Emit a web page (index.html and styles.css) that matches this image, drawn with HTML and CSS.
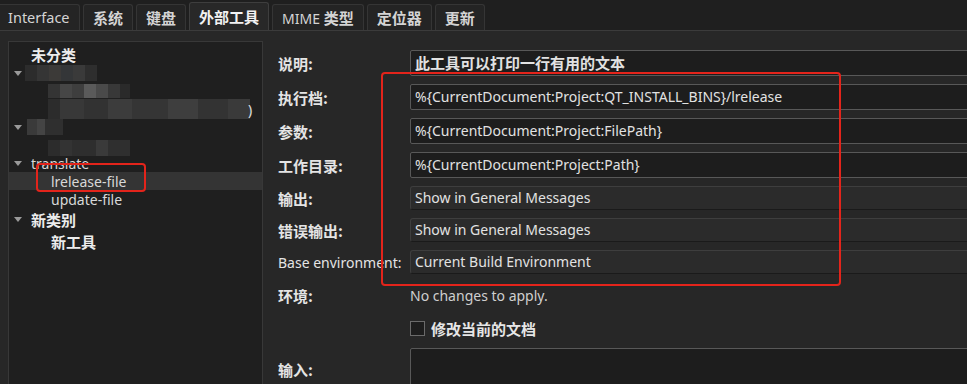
FILE: index.html
```html
<!doctype html>
<html lang="zh-CN">
<head>
    <meta charset="utf-8">
    <title>外部工具</title>
    <link rel="stylesheet" href="styles.css">
</head>
<body>
    <div class="page">
        <!-- tab bar -->
        <div class="tabbar">
            <div class="tab first">Interface</div>
            <div class="tab zh">系统</div>
            <div class="tab zh">键盘</div>
            <div class="tab zh current">外部工具</div>
            <div class="tab">MIME <span class="zh">类型</span></div>
            <div class="tab zh">定位器</div>
            <div class="tab zh">更新</div>
        </div>

        <div class="main">
            <!-- tool tree -->
            <div class="tree">
                <div class="row cat zh"><span class="arrow none"></span>未分类</div>
                <div class="row"><span class="arrow"></span><span class="blur blur-a"></span></div>
                <div class="row child"><span class="blur blur-b"></span></div>
                <div class="row child"><span class="blur blur-c"></span><span class="paren">)</span></div>
                <div class="row"><span class="arrow"></span><span class="blur blur-d"></span></div>
                <div class="row child"><span class="blur blur-e"></span></div>
                <div class="row"><span class="arrow"></span>translate</div>
                <div class="row child selected">lrelease-file</div>
                <div class="row child">update-file</div>
                <div class="row cat zh"><span class="arrow"></span>新类别</div>
                <div class="row cat child zh">新工具</div>
            </div>

            <!-- tool settings -->
            <div class="form">
                <div class="label zh">说明:</div>
                <div class="edit zh">此工具可以打印一行有用的文本</div>

                <div class="label zh">执行档:</div>
                <div class="edit">%{CurrentDocument:Project:QT_INSTALL_BINS}/lrelease</div>

                <div class="label zh">参数:</div>
                <div class="edit">%{CurrentDocument:Project:FilePath}</div>

                <div class="label zh">工作目录:</div>
                <div class="edit">%{CurrentDocument:Project:Path}</div>

                <div class="label zh">输出:</div>
                <div class="combo">Show in General Messages</div>

                <div class="label zh">错误输出:</div>
                <div class="combo">Show in General Messages</div>

                <div class="label">Base environment:</div>
                <div class="combo">Current Build Environment</div>

                <div class="label zh">环境:</div>
                <div class="note">No changes to apply.</div>

                <div class="label"></div>
                <div class="check"><span class="box"></span><span class="zh">修改当前的文档</span></div>

                <div class="label zh top">输入:</div>
                <div class="input-box"></div>
            </div>
        </div>

        <!-- red annotation marks -->
        <div class="mark mark-item"></div>
        <div class="mark mark-fields"></div>
    </div>
</body>
</html>
```

FILE: styles.css
```css
html, body {
    margin: 0;
    padding: 0;
    width: 967px;
    height: 384px;
    overflow: hidden;
}

body {
    background: #272727;
    color: #dcdcdc;
    font-family: "Noto Sans", "Noto Sans CJK SC", sans-serif;
    font-size: 14px;
}

.page {
    position: relative;
    height: 384px;
    overflow: hidden;
}

.zh {
    font-family: "Noto Sans CJK SC", sans-serif;
    font-weight: bold;
    font-size: 15px;
}

/* tabs */
.tabbar {
    display: flex;
    align-items: flex-end;
    gap: 3px;
    height: 30px;
    background: #1f1f1f;
    border-bottom: 1px solid #3b3b3b;
}

.tab {
    height: 25px;
    line-height: 25px;
    padding: 0 9px;
    background: #242424;
    border: 1px solid #353535;
    border-bottom: none;
    border-radius: 3px 3px 0 0;
    color: #d4d4d4;
    font-size: 14px;
    white-space: nowrap;
}

.tab.zh {
    font-size: 15px;
}

.tab.first {
    width: 62px;
    border-left: none;
    border-top-left-radius: 0;
    padding-left: 8px;
    font-size: 14.5px;
}

.tab.current {
    height: 27px;
    line-height: 27px;
    background: #282828;
    border-color: #3e3e3e;
    color: #f2f2f2;
}

/* main area */
.main {
    display: flex;
    padding-top: 10px;
}

.tree {
    flex: none;
    width: 255px;
    height: 350px;
    margin-left: 8px;
    padding-top: 2px;
    background: #1f1f1f;
    border: 1px solid #383838;
    box-sizing: border-box;
}

.row {
    display: flex;
    align-items: center;
    height: 18px;
    padding-left: 5px;
    white-space: nowrap;
    color: #d8d8d8;
}

.row.cat {
    height: 22px;
    color: #ececec;
}

.row.cat:first-child {
    height: 20px;
}

.row.child {
    padding-left: 42px;
}

.row.selected {
    background: #343434;
}

.arrow {
    width: 0;
    height: 0;
    margin: 0 9px 0 0;
    border-left: 4px solid transparent;
    border-right: 4px solid transparent;
    border-top: 5px solid #9a9a9a;
    flex: none;
}

.arrow.none {
    border-top-color: transparent;
}

/* pixelated blur in the tree */
.blur {
    display: block;
    height: 16px;
    flex: none;
}

.blur-a {
    width: 72px;
    margin-left: -6px;
    background: linear-gradient(90deg, #2c2c2c 0 12px, #353535 12px 24px, #3c3a38 24px 36px, #343638 36px 48px, #3a3a3a 48px 60px, #2e2e2e 60px);
}

.blur-b {
    width: 82px;
    height: 14px;
    margin-left: -3px;
    background: linear-gradient(90deg, #343434 0 12px, #464646 12px 24px, #3e3e3e 24px 36px, #5a5a5a 36px 48px, #4a4a4a 48px 60px, #383838 60px 72px, #2a2a2a 72px);
}

.blur-c {
    width: 202px;
    height: 20px;
    margin-left: -3px;
    background: linear-gradient(90deg, #2c2c2c 0 12px, #383838 12px 36px, #323232 36px 60px, #3c3c3c 60px 84px, #353535 84px 120px, #3e3e3e 120px 150px, #333333 150px 180px, #3a3a3a 180px);
}

.paren {
    color: #e0e0e0;
    margin-left: -2px;
}

.blur-d {
    width: 36px;
    margin-left: -4px;
    background: linear-gradient(90deg, #3a3a3a 0 10px, #444444 10px 18px, #2f2f2f 18px);
}

.blur-e {
    width: 82px;
    margin-left: -3px;
    margin-top: 6px;
    background: linear-gradient(90deg, #2c2c2c 0 12px, #333333 12px 24px, #2e2e2e 24px 48px, #3a3a3a 48px 60px, #2f2f2f 60px);
}

/* form */
.form {
    flex: none;
    display: grid;
    grid-template-columns: 132px 600px;
    grid-template-rows: 26px 26px 26px 26px 24px 24px 24px 26px 24px 36px;
    row-gap: 8px;
    padding-top: 9px;
    padding-left: 15px;
    align-items: center;
}

.label {
    color: #e4e4e4;
    white-space: nowrap;
    font-size: 14px;
}

.label.zh {
    font-size: 15px;
}

.label.top {
    align-self: start;
    padding-top: 11px;
}

.edit {
    height: 26px;
    line-height: 24px;
    box-sizing: border-box;
    padding-left: 4px;
    background: #1d1d1d;
    border: 1px solid #585858;
    border-radius: 2px;
    color: #e2e2e2;
    white-space: nowrap;
}

.combo {
    height: 24px;
    line-height: 22px;
    box-sizing: border-box;
    padding-left: 4px;
    background: #2b2b2b;
    border: 1px solid #3e3e3e;
    border-bottom-color: #1a1a1a;
    border-radius: 3px;
    color: #e2e2e2;
    white-space: nowrap;
}

.note {
    color: #cfcfcf;
}

.check {
    display: flex;
    align-items: center;
    gap: 6px;
    color: #e6e6e6;
}

.box {
    width: 13px;
    height: 13px;
    background: #1d1d1d;
    border: 1px solid #6a6a6a;
}

.input-box {
    height: 40px;
    background: #1d1d1d;
    border: 1px solid #585858;
    border-radius: 2px;
    align-self: start;
}

/* red annotation marks */
.mark {
    position: absolute;
    border: 2px solid #e3241b;
    border-radius: 4px;
}

.mark-item {
    left: 36px;
    top: 163px;
    width: 106px;
    height: 25px;
}

.mark-fields {
    left: 381px;
    top: 72px;
    width: 456px;
    height: 210px;
}
```
